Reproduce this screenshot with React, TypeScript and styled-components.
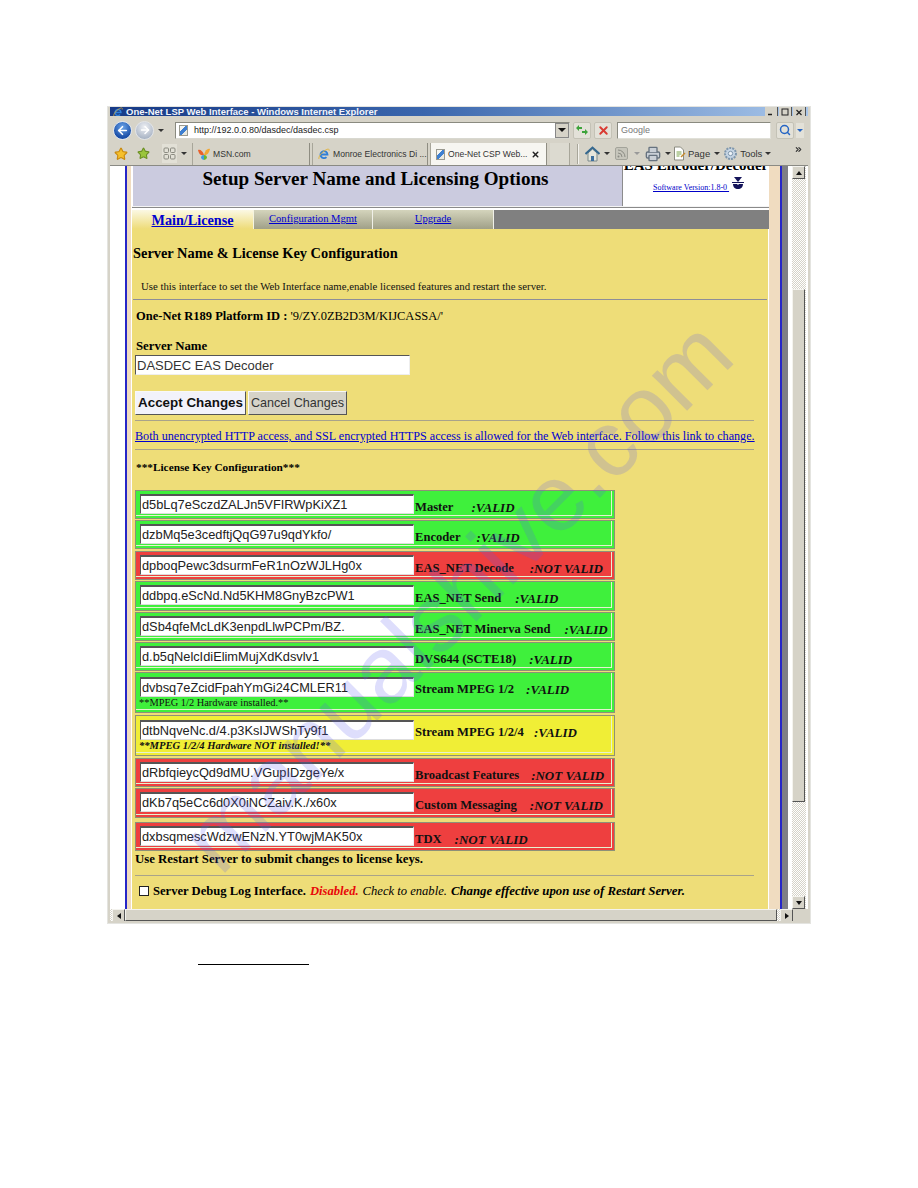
import React from 'react';
import styled, { createGlobalStyle } from 'styled-components';
import { ArrowLeft, ArrowRight, ChevronsRight, Printer, Search, Star, X } from 'lucide-react';

const keys = [
  { key: 'd5bLq7eSczdZALJn5VFIRWpKiXZ1', name: 'Master', status: ':VALID', tone: 'green', gap: 18, h: 29, mb: 1 },
  { key: 'dzbMq5e3cedftjQqG97u9qdYkfo/', name: 'Encoder', status: ':VALID', tone: 'green', gap: 16, h: 29, mb: 2 },
  { key: 'dpboqPewc3dsurmFeR1nOzWJLHg0x', name: 'EAS_NET Decode', status: ':NOT VALID', tone: 'red', gap: 16, h: 29, mb: 1 },
  { key: 'ddbpq.eScNd.Nd5KHM8GnyBzcPW1', name: 'EAS_NET Send', status: ':VALID', tone: 'green', gap: 14, h: 30, mb: 1 },
  { key: 'dSb4qfeMcLdK3enpdLlwPCPm/BZ.', name: 'EAS_NET Minerva Send', status: ':VALID', tone: 'green', gap: 14, h: 29, mb: 1 },
  { key: 'd.b5qNelcIdiElimMujXdKdsvlv1', name: 'DVS644 (SCTE18)', status: ':VALID', tone: 'green', gap: 13, h: 29, mb: 1 },
  { key: 'dvbsq7eZcidFpahYmGi24CMLER11', name: 'Stream MPEG 1/2', status: ':VALID', tone: 'green', gap: 12, h: 41, mb: 2, note: '**MPEG 1/2 Hardware installed.**' },
  { key: 'dtbNqveNc.d/4.p3KsIJWShTy9f1', name: 'Stream MPEG 1/2/4', status: ':VALID', tone: 'yellow', gap: 10, h: 41, mb: 2, note: '**MPEG 1/2/4 Hardware NOT installed!**', noteItalic: true },
  { key: 'dRbfqieycQd9dMU.VGupIDzgeYe/x', name: 'Broadcast Features', status: ':NOT VALID', tone: 'red', gap: 12, h: 29, mb: 1 },
  { key: 'dKb7q5eCc6d0X0iNCZaiv.K./x60x', name: 'Custom Messaging', status: ':NOT VALID', tone: 'red', gap: 13, h: 30, mb: 4 },
  { key: 'dxbsqmescWdzwENzN.YT0wjMAK50x', name: 'TDX', status: ':NOT VALID', tone: 'red', gap: 13, h: 29, mb: 0 },
];

const toneColors: Record<string, string> = {
  green: '#3ff03c',
  red: '#ee3f3f',
  yellow: '#f0ee36',
};

const IeLogo: React.FC<{ size: number }> = ({ size }) => (
  <svg width={size} height={size} viewBox="0 0 12 12" style={{ flex: 'none' }}>
    <path d="M3 6.5h6.5a3.5 3.5 0 1 0-1 2.6" fill="none" stroke="#2f7fd8" strokeWidth="1.8" />
    <path d="M1 11C0 9 4 3 10 1c1 0 1.500 1 1 2" fill="none" stroke="#e2b23a" strokeWidth="0.9" />
  </svg>
);

const App: React.FC = () => {
  return (
    <>
      <GlobalStyle />
      <Sheet>
        <BrowserWindow>
          <TitleBar>
            <IeLogo size={10} />
            <TitleText>One-Net LSP Web Interface - Windows Internet Explorer</TitleText>
            <WindowButtons>
              <WindowButton>
                <svg width="8" height="8" viewBox="0 0 8 8"><path d="M1 6.500h4" stroke="#222" strokeWidth="1.500" /></svg>
              </WindowButton>
              <WindowButton>
                <svg width="8" height="8" viewBox="0 0 8 8"><rect x="1" y="1" width="6" height="6" fill="none" stroke="#222" /></svg>
              </WindowButton>
              <WindowButton>
                <svg width="8" height="8" viewBox="0 0 8 8"><path d="M1.500 2l5 5M6.500 2l-5 5" stroke="#222" strokeWidth="1.200" /></svg>
              </WindowButton>
            </WindowButtons>
          </TitleBar>
          <AddressRow>
            <BackButton><ArrowLeft size={13} strokeWidth={3} color="#fff" /></BackButton>
            <ForwardButton><ArrowRight size={12} strokeWidth={3} color="#fff" /></ForwardButton>
            <TinyCaret $l={4} $r={11} />
            <AddressBox>
              <PageIcon />
              <AddressText>http://192.0.0.80/dasdec/dasdec.csp</AddressText>
              <ComboArrow />
            </AddressBox>
            <SquareButton $ml={3}>
              <svg width="14" height="14" viewBox="0 0 14 14">
                <path d="M1 5l3-3v2h3v2H4v2zM13 9l-3 3v-2H7V8h3V6z" fill="#3da33a" />
              </svg>
            </SquareButton>
            <SquareButton $ml={3}><X size={13} strokeWidth={3.5} color="#d93a32" /></SquareButton>
            <SearchBox>Google</SearchBox>
            <SquareButton $ml={5}><Search size={12} strokeWidth={3} color="#2565c4" /></SquareButton>
            <SmallDrop />
          </AddressRow>
          <TabRow>
            <Star size={14} fill="#f5c02c" color="#c98a10" />
            <AddStar><Star size={13} fill="#9bc53c" color="#6a8e22" /></AddStar>
            <QuickTabs>
              <svg width="13" height="13" viewBox="0 0 13 13">
                <g fill="none" stroke="#8a8a80">
                  <rect x="1" y="1" width="4.5" height="4.5" rx="1" />
                  <rect x="7.5" y="1" width="4.5" height="4.5" rx="1" />
                  <rect x="1" y="7.5" width="4.5" height="4.5" rx="1" />
                  <rect x="7.5" y="7.5" width="4.5" height="4.5" rx="1" />
                </g>
              </svg>
            </QuickTabs>
            <TinyCaret $l={4} $r={5} />
            <BrowserTab $width={118} $gap={2}>
              <svg width="12" height="12" viewBox="0 0 12 12">
                <path d="M0 2c2-1 5 1 6 5-2 1-5 0-6-5z" fill="#e8612c" />
                <path d="M12 1c-2-1-5 1-6 6 2 1 5-1 6-6z" fill="#f2a732" />
                <path d="M6 7c-2 0-3 1-3 3 1 1 2 2 3 2z" fill="#3f9de0" />
                <path d="M6 7c2 0 3 1 3 3-1 1-2 2-3 2z" fill="#6cb52e" />
              </svg>
              <TabLabel>MSN.com</TabLabel>
            </BrowserTab>
            <BrowserTab $width={116} $gap={2}>
              <IeLogo size={12} />
              <TabLabel>Monroe Electronics Di ...</TabLabel>
            </BrowserTab>
            <BrowserTab $width={117} $gap={3} $active>
              <PageIcon />
              <TabLabel>One-Net CSP Web...</TabLabel>
              <TabClose><X size={9} strokeWidth={4} color="#222" /></TabClose>
            </BrowserTab>
            <NewTab />
            <Divider />
            <CommandBar>
              <svg width="15" height="16" viewBox="0 0 15 16">
                <path d="M3 7v8h9V7L7.5 3z" fill="#e6e6dc" stroke="#7b8a8c" />
                <rect x="6" y="10" width="3" height="5" fill="#3d6f9e" />
                <path d="M0.5 8L7.5 1.5 14.5 8" fill="none" stroke="#35688f" strokeWidth="2" />
              </svg>
              <TinyCaret $l={4} $r={5} />
              <svg width="13" height="13" viewBox="0 0 13 13">
                <rect x="0.5" y="0.5" width="12" height="12" rx="1.5" fill="#c6c5bb" stroke="#a3a39a" />
                <circle cx="3.5" cy="9.5" r="1" fill="#8c8c84" />
                <path d="M3 6a4 4 0 0 1 4 4M3 3a7 7 0 0 1 7 7" fill="none" stroke="#8c8c84" />
              </svg>
              <TinyCaret $l={6} $r={5} $faint />
              <Printer size={16} color="#66727f" fill="#c9cfd6" />
              <TinyCaret $l={4} $r={2} />
              <svg width="13" height="15" viewBox="0 0 13 15">
                <path d="M1.5 1h6l3 3v10h-9z" fill="#fff" stroke="#8b8b80" />
                <path d="M3.5 6h5M3.5 8h5M3.5 10h3" stroke="#7aa34a" />
                <path d="M8 11l4-4" stroke="#c68a2e" strokeWidth="1.5" />
              </svg>
              <CommandLabel>Page</CommandLabel>
              <TinyCaret $l={4} $r={3} />
              <svg width="15" height="15" viewBox="0 0 15 15">
                <circle cx="7.5" cy="7.5" r="5.5" fill="#c6d5e4" stroke="#7f97ad" strokeWidth="2" strokeDasharray="2 1" />
                <circle cx="7.5" cy="7.5" r="2.2" fill="#eef3f8" stroke="#7f97ad" />
              </svg>
              <CommandLabel>Tools</CommandLabel>
              <TinyCaret $l={3} $r={0} />
            </CommandBar>
            <OverflowMark><ChevronsRight size={9} strokeWidth={3} color="#333" /></OverflowMark>
          </TabRow>
          <Viewport>
            <PageArea>
              <LeftGutter />
              <BlueRuleLeft />
              <CenterColumn>
                <Banner>
                  <BannerTitle>
                    <h1>Setup Server Name and Licensing Options</h1>
                  </BannerTitle>
                  <BannerLogo>
                    <ClippedHeading>EAS Encoder/Decoder</ClippedHeading>
                    <VersionLine>
                      <VersionLink>Software Version:1.8-0 </VersionLink>
                      <svg width="12" height="12" viewBox="0 0 12 12">
                        <path d="M2 0h8L6 5z" fill="#14145a" />
                        <path d="M0 5.5h12" stroke="#14145a" strokeWidth="1" />
                        <path d="M1 7h4l1 1 1-1h4c0 3-2 5-5 5S1 10 1 7z" fill="#14145a" />
                      </svg>
                    </VersionLine>
                  </BannerLogo>
                </Banner>
                <Tabs>
                  <MainTab>Main/License</MainTab>
                  <SideTab $width={119}>Configuration Mgmt</SideTab>
                  <SideTab $width={121}>Upgrade</SideTab>
                  <TabFiller />
                </Tabs>
                <Panel>
                  <PanelTitle>Server Name &amp; License Key Configuration</PanelTitle>
                  <Intro>Use this interface to set the Web Interface name,enable licensed features and restart the server.</Intro>
                  <FullRule />
                  <PlatformLine>
                    <b>One-Net R189 Platform ID :</b> '9/ZY.0ZB2D3M/KIJCASSA/'
                  </PlatformLine>
                  <FieldLabel>Server Name</FieldLabel>
                  <ServerInput>DASDEC EAS Decoder</ServerInput>
                  <ButtonRow>
                    <AcceptButton>Accept Changes</AcceptButton>
                    <CancelButton>Cancel Changes</CancelButton>
                  </ButtonRow>
                  <InnerRule $top={5} />
                  <AccessLink>Both unencrypted HTTP access, and SSL encrypted HTTPS access is allowed for the Web interface. Follow this link to change.</AccessLink>
                  <InnerRule $top={6} />
                  <LicenseHeading>***License Key Configuration***</LicenseHeading>
                  <KeyTable>
                    {keys.map((row) => (
                      <KeyRow key={row.key} $tone={toneColors[row.tone]} $height={row.h} $mb={row.mb}>
                        <KeyField>
                          <KeyInput $low={!!row.note}>{row.key}</KeyInput>
                          {row.note && <KeyNote $italic={row.noteItalic}>{row.note}</KeyNote>}
                        </KeyField>
                        <KeyLabel>
                          <KeyName>{row.name}</KeyName>
                          <KeyStatus $gap={row.gap}>{row.status}</KeyStatus>
                        </KeyLabel>
                      </KeyRow>
                    ))}
                  </KeyTable>
                  <RestartNote>Use Restart Server to submit changes to license keys.</RestartNote>
                  <InnerRule $top={9} />
                  <DebugLine>
                    <DebugBox />
                    <b>Server Debug Log Interface.</b>
                    <Disabled>Disabled.</Disabled>
                    <em>Check to enable.</em>
                    <LastNote>Change effective upon use of Restart Server.</LastNote>
                  </DebugLine>
                </Panel>
              </CenterColumn>
              <RightMargin />
              <BlueRuleRight />
              <GreyGutter />
            </PageArea>
            <VerticalScroll>
              <ScrollArrow><UpTriangle /></ScrollArrow>
              <ScrollTrackTop />
              <ScrollThumb />
              <ScrollTrack />
              <ScrollArrow><DownTriangle /></ScrollArrow>
            </VerticalScroll>
          </Viewport>
          <HorizontalScroll>
            <ScrollArrow><LeftTriangle /></ScrollArrow>
            <HorizontalThumb />
            <HorizontalTrack />
            <ScrollArrow><RightTriangle /></ScrollArrow>
            <ScrollCorner />
          </HorizontalScroll>
          <Watermark aria-hidden>manualshive.com</Watermark>
        </BrowserWindow>
        <UnderLine />
      </Sheet>
    </>
  );
};

const GlobalStyle = createGlobalStyle`
  html, body {
    margin: 0;
    padding: 0;
    background: #fff;
  }
`;

const Sheet = styled.div`
  width: 918px;
  height: 1188px;
  padding-top: 107px;
  box-sizing: border-box;
  overflow: hidden;
  font-family: 'Liberation Serif', serif;
  color: #000;
`;

const BrowserWindow = styled.div`
  position: relative;
  width: 702px;
  height: 816px;
  margin-left: 108px;
  box-sizing: border-box;
  border-left: 2px solid #d6d3c8;
  border-right: 2px solid #d6d3c8;
  border-bottom: 2px solid #d6d3c8;
  overflow: hidden;
  box-shadow: 0 0 0 1px #e4e4e0;
`;

const TitleBar = styled.div`
  height: 9px;
  display: flex;
  align-items: center;
  padding-left: 3px;
  background: linear-gradient(90deg, #173a86 0%, #3a66ad 45%, #a8c6ea 100%);
  overflow: hidden;
`;

const TitleText = styled.div`
  flex: 1;
  font: bold 9.5px/9px 'Liberation Sans', sans-serif;
  color: #f2f5fb;
  padding-left: 3px;
  white-space: nowrap;
`;

const WindowButtons = styled.div`
  display: flex;
  gap: 1px;
  padding-right: 2px;
`;

const WindowButton = styled.span`
  display: flex;
  align-items: center;
  justify-content: center;
  width: 13px;
  height: 9px;
  background: #d6d3c8;
  border-right: 1px solid #555;
  box-sizing: border-box;
`;

const AddressRow = styled.div`
  height: 26px;
  display: flex;
  align-items: center;
  background: #d6d3c8;
  padding: 2px 0 0 3px;
  box-sizing: border-box;
`;

const BackButton = styled.div`
  flex: none;
  width: 19px;
  height: 19px;
  border-radius: 50%;
  background: radial-gradient(circle at 50% 30%, #6aa3e8, #1b4fa8 70%);
  border: 1px solid #dfe6f0;
  box-sizing: border-box;
  display: flex;
  align-items: center;
  justify-content: center;
`;

const ForwardButton = styled(BackButton)`
  margin-left: 3px;
  background: radial-gradient(circle at 50% 30%, #eef0f4, #a8b3c4 80%);
  border-color: #e3e5e8;
`;

const TinyCaret = styled.span<{ $l: number; $r: number; $faint?: boolean }>`
  flex: none;
  width: 0;
  height: 0;
  margin: 0 ${(p) => p.$r}px 0 ${(p) => p.$l}px;
  border-left: 3px solid transparent;
  border-right: 3px solid transparent;
  border-top: 3px solid ${(p) => (p.$faint ? '#999' : '#333')};
`;

const AddressBox = styled.div`
  flex: none;
  width: 395px;
  height: 17px;
  padding-left: 3px;
  display: flex;
  align-items: center;
  gap: 4px;
  background: #fff;
  border: 1px solid #8a8a80;
  border-bottom-color: #d8d8d0;
  border-right-color: #d8d8d0;
  box-sizing: border-box;
`;

const PageIcon = styled.span`
  flex: none;
  width: 9px;
  height: 11px;
  background: linear-gradient(135deg, #f5f5f0 35%, #3e7fd0 36%, #3e7fd0 65%, #e8e8e0 66%);
  border: 1px solid #9a9a90;
  box-sizing: border-box;
`;

const AddressText = styled.span`
  flex: 1;
  padding-left: 2px;
  font: 9px 'Liberation Sans', sans-serif;
  color: #222;
`;

const ComboArrow = styled.span`
  flex: none;
  width: 14px;
  height: 15px;
  background: #d6d3c8;
  border: 1px solid #888;
  box-sizing: border-box;
  position: relative;

  &::after {
    content: '';
    position: absolute;
    left: 2px;
    top: 4px;
    border-left: 4px solid transparent;
    border-right: 4px solid transparent;
    border-top: 4px solid #111;
  }
`;

const SquareButton = styled.div<{ $ml: number }>`
  flex: none;
  width: 18px;
  height: 17px;
  margin-left: ${(p) => p.$ml}px;
  display: flex;
  align-items: center;
  justify-content: center;
  background: #e3e1d8;
  border: 1px solid #c4c2b6;
  border-radius: 2px;
  box-sizing: border-box;
`;

const SearchBox = styled.div`
  flex: none;
  width: 154px;
  height: 17px;
  margin-left: 5px;
  padding-left: 3px;
  font: 9px/15px 'Liberation Sans', sans-serif;
  color: #777;
  background: #fff;
  border: 1px solid #8a8a80;
  border-bottom-color: #e0e0d8;
  border-right-color: #e0e0d8;
  box-sizing: border-box;
`;

const SmallDrop = styled.div`
  flex: none;
  width: 8px;
  height: 15px;
  margin-left: 2px;
  background: #e3e1d8;
  position: relative;

  &::after {
    content: '';
    position: absolute;
    left: 1px;
    top: 6px;
    border-left: 3px solid transparent;
    border-right: 3px solid transparent;
    border-top: 3px solid #2565c4;
  }
`;

const TabRow = styled.div`
  position: relative;
  height: 24px;
  display: flex;
  align-items: center;
  background: #d6d3c8;
  padding-left: 4px;
  box-sizing: border-box;
  border-bottom: 1px solid #8a8a84;
`;

const AddStar = styled.span`
  display: flex;
  margin-left: 9px;
`;

const QuickTabs = styled.span`
  flex: none;
  display: flex;
  align-items: center;
  justify-content: center;
  width: 15px;
  height: 19px;
  margin-left: 12px;
  background: #e2e0d6;
`;

const BrowserTab = styled.div<{ $width: number; $gap: number; $active?: boolean }>`
  flex: none;
  width: ${(p) => p.$width}px;
  height: 22px;
  margin: 1px ${(p) => p.$gap}px 0 0;
  padding-left: 5px;
  display: flex;
  align-items: center;
  gap: 3px;
  box-sizing: border-box;
  font: 8.6px 'Liberation Sans', sans-serif;
  color: #333;
  white-space: nowrap;
  background: ${(p) => (p.$active ? '#f7f6f1' : '#d6d3c8')};
  border-left: 1px solid #a8a69a;
  border-right: 1px solid #8f8d82;
`;

const TabLabel = styled.span`
  flex: 1;
`;

const TabClose = styled.span`
  display: flex;
  margin-right: 6px;
`;

const NewTab = styled.div`
  flex: none;
  width: 20px;
  height: 22px;
  margin-top: 1px;
  background: #dcdad0;
  border-right: 1px solid #a8a69a;
  box-sizing: border-box;
`;

const Divider = styled.div`
  flex: none;
  width: 2px;
  height: 20px;
  margin-left: 7px;
  background: #f4f3ee;
  border-left: 1px solid #a8a69a;
  box-sizing: border-box;
`;

const CommandBar = styled.div`
  display: flex;
  align-items: center;
  margin-left: 6px;
`;

const CommandLabel = styled.span`
  font: 9.5px 'Liberation Sans', sans-serif;
  color: #333;
  margin-left: 2px;
`;

const OverflowMark = styled.span`
  position: absolute;
  right: 5px;
  top: 3px;
  display: flex;
`;

const Viewport = styled.div`
  height: 743px;
  display: flex;
  background: #fff;
`;

const PageArea = styled.div`
  flex: none;
  width: 682px;
  display: flex;
  overflow: hidden;
`;

const LeftGutter = styled.div`
  flex: none;
  width: 15px;
  background: #fff;
`;

const BlueRuleLeft = styled.div`
  flex: none;
  width: 7px;
  box-sizing: border-box;
  border-left: 2px solid #2626c8;
  background: #f0dcc0;
  border-right: 1px solid #fff;
`;

const CenterColumn = styled.div`
  flex: none;
  width: 637px;
  display: flex;
  flex-direction: column;
`;

const Banner = styled.div`
  height: 40px;
  display: flex;
  flex: none;
  margin-bottom: 3px;
  border-bottom: 1px solid #f4f4f4;
  box-shadow: 0 1px 0 #8a8a8a;
`;

const BannerTitle = styled.div`
  flex: none;
  width: 490px;
  margin-left: 1px;
  background: #cbcbdf;
  border-right: 1px solid #8c8c8c;
  box-sizing: border-box;

  h1 {
    margin: 0;
    padding-top: 1px;
    padding-right: 4px;
    font: bold 19.1px/24px 'Liberation Serif', serif;
    text-align: center;
    white-space: nowrap;
  }
`;

const BannerLogo = styled.div`
  flex: 1;
  background: #fff;
  overflow: hidden;
  text-align: center;
`;

const ClippedHeading = styled.div`
  font: bold 15px/14px 'Liberation Serif', serif;
  height: 6px;
  margin-top: -8px;
  padding-bottom: 8px;
  white-space: nowrap;
`;

const VersionLine = styled.div`
  display: flex;
  align-items: flex-start;
  gap: 3px;
  margin: 5px 0 0 30px;
`;

const VersionLink = styled.a`
  font: 8px/12px 'Liberation Serif', serif;
  color: #0000c8;
  text-decoration: underline;
  white-space: pre;
  margin-top: 5px;
`;

const Tabs = styled.div`
  height: 19px;
  display: flex;
  flex: none;
`;

const MainTab = styled.a`
  flex: none;
  width: 122px;
  text-align: center;
  font: bold 14.2px/21px 'Liberation Serif', serif;
  color: #0000d0;
  text-decoration: underline;
  background: linear-gradient(180deg, #fbf8e4 0%, #eedc78 100%);
  border-right: 1px solid #f4f4e0;
  box-sizing: border-box;
`;

const SideTab = styled.a<{ $width: number }>`
  flex: none;
  width: ${(p) => p.$width}px;
  text-align: center;
  font: 10.6px/18px 'Liberation Serif', serif;
  color: #0000d0;
  text-decoration: underline;
  background: linear-gradient(180deg, #d4d4bc 0%, #a0a088 100%);
  border-right: 1px solid #f0f0e8;
  box-sizing: border-box;
`;

const TabFiller = styled.div`
  flex: 1;
  background: #808080;
`;

const Panel = styled.div`
  flex: 1;
  background: #eedd78;
  padding: 17px 0 0 1px;
  border-right: 1px solid #fff;
  box-sizing: border-box;
`;

const PanelTitle = styled.div`
  font: bold 14.4px/15px 'Liberation Serif', serif;
  white-space: nowrap;
`;

const Intro = styled.div`
  font: 10.75px/12px 'Liberation Serif', serif;
  margin: 19px 0 0 8px;
  color: #111;
  white-space: nowrap;
`;

const FullRule = styled.div`
  height: 1px;
  margin: 7px 1px 0 0;
  background: #8d8d98;
`;

const PlatformLine = styled.div`
  font: 12.5px/14px 'Liberation Serif', serif;
  margin: 9px 0 0 3px;
`;

const FieldLabel = styled.div`
  font: bold 12.8px/13px 'Liberation Serif', serif;
  margin: 17px 0 0 3px;
`;

const ServerInput = styled.div`
  width: 275px;
  height: 20px;
  margin: 2px 0 0 2px;
  padding-left: 1px;
  font: 13px/19px 'Liberation Sans', sans-serif;
  color: #333;
  background: #fff;
  border-top: 1px solid #555;
  border-left: 1px solid #555;
  border-right: 1px solid #eee;
  border-bottom: 1px solid #eee;
  box-sizing: border-box;
`;

const ButtonRow = styled.div`
  display: flex;
  gap: 2px;
  margin: 16px 0 0 2px;
`;

const AcceptButton = styled.div`
  width: 111px;
  height: 24px;
  font: bold 13.4px/22px 'Liberation Sans', sans-serif;
  text-align: center;
  white-space: nowrap;
  color: #111;
  background: #f2f2fa;
  border: 1px solid #f8f8f8;
  border-right-color: #555;
  border-bottom-color: #555;
  box-sizing: border-box;
`;

const CancelButton = styled(AcceptButton)`
  width: 99px;
  font: 12.6px/22px 'Liberation Sans', sans-serif;
  color: #333;
  background: #d6d3c8;
`;

const InnerRule = styled.div<{ $top: number }>`
  height: 1px;
  margin: ${(p) => p.$top}px 14px 0 2px;
  background: #a9a38a;
`;

const AccessLink = styled.a`
  display: block;
  font: 12.15px/14px 'Liberation Serif', serif;
  color: #0000d0;
  text-decoration: underline;
  margin: 8px 0 5px 2px;
  white-space: nowrap;
`;

const LicenseHeading = styled.div`
  font: bold 11.3px/13px 'Liberation Serif', serif;
  margin: 11px 0 0 3px;
`;

const KeyTable = styled.div`
  width: 480px;
  margin: 16px 0 0 2px;
  display: flex;
  flex-direction: column;
`;

const KeyRow = styled.div<{ $tone: string; $height: number; $mb: number }>`
  display: flex;
  flex: none;
  height: ${(p) => p.$height}px;
  margin-bottom: ${(p) => p.$mb}px;
  padding: 3px 0 0 4px;
  background: ${(p) => p.$tone};
  border: 1px solid #8d9078;
  box-shadow: inset -2px -2px 0 ${(p) => p.$tone}, inset -3px -3px 0 #e6f2d0;
  box-sizing: border-box;
`;

const KeyField = styled.div`
  flex: none;
  width: 274px;
`;

const KeyInput = styled.div<{ $low: boolean }>`
  width: 274px;
  height: 20px;
  margin-top: ${(p) => (p.$low ? 1 : 0)}px;
  padding-left: 1px;
  font: 12.8px/18px 'Liberation Sans', sans-serif;
  color: #222;
  background: #fff;
  border-top: 2px solid #555;
  border-left: 1px solid #555;
  border-right: 1px solid #eee;
  border-bottom: 1px solid #ddd;
  box-sizing: border-box;
  white-space: nowrap;
`;

const KeyNote = styled.div<{ $italic?: boolean }>`
  font: ${(p) => (p.$italic ? 'italic bold 10.6px' : 'normal 10.4px')}/12px 'Liberation Serif', serif;
  color: #111;
  margin: 0 0 0 -1px;
  white-space: nowrap;
`;

const KeyLabel = styled.div`
  margin-left: 1px;
  padding-top: 6px;
  font: bold 12.6px/15px 'Liberation Serif', serif;
  white-space: nowrap;
  display: flex;
`;

const KeyName = styled.span`
  color: #111;
`;

const KeyStatus = styled.em<{ $gap: number }>`
  margin-left: ${(p) => p.$gap}px;
  font-size: 13px;
  color: #111;
`;

const RestartNote = styled.div`
  font: bold 12.8px/14px 'Liberation Serif', serif;
  margin: 1px 0 0 2px;
`;

const DebugLine = styled.div`
  display: flex;
  align-items: center;
  gap: 4px;
  margin: 8px 0 0 6px;
  font: 12.6px/14px 'Liberation Serif', serif;
  white-space: nowrap;
`;

const DebugBox = styled.span`
  width: 8px;
  height: 8px;
  background: #fff;
  border: 1px solid #222;
`;

const Disabled = styled.b`
  color: #e80808;
  font-style: italic;
`;

const LastNote = styled.b`
  font-style: italic;
  font-size: 12.8px;
`;

const RightMargin = styled.div`
  flex: none;
  width: 11px;
  background: #f0dcc0;
`;

const BlueRuleRight = styled.div`
  flex: none;
  width: 2px;
  background: #2626c8;
`;

const GreyGutter = styled.div`
  flex: none;
  width: 10px;
  background: linear-gradient(90deg, #7f7f86 60%, #fff 60%);
`;

const ScrollArrow = styled.div`
  flex: none;
  width: 13px;
  height: 13px;
  display: flex;
  align-items: center;
  justify-content: center;
  background: #d6d3c8;
  border: 1px solid #f4f3ee;
  border-right-color: #555;
  border-bottom-color: #555;
  box-sizing: border-box;
`;

const VerticalScroll = styled.div`
  flex: none;
  width: 14px;
  display: flex;
  flex-direction: column;
  background: repeating-conic-gradient(#d6d3c8 0 25%, #fff 0 50%) 0 0 / 2px 2px;
`;

const ScrollTrackTop = styled.div`
  height: 110px;
  flex: none;
`;

const ScrollThumb = styled.div`
  flex: none;
  height: 513px;
  width: 13px;
  background: #d6d3c8;
  border: 1px solid #f4f3ee;
  border-right-color: #555;
  border-bottom-color: #555;
  box-sizing: border-box;
`;

const ScrollTrack = styled.div`
  flex: 1;
`;

const HorizontalScroll = styled.div`
  height: 12px;
  display: flex;
  background: repeating-conic-gradient(#d6d3c8 0 25%, #fff 0 50%) 0 0 / 2px 2px;
  padding-left: 2px;
`;

const HorizontalThumb = styled.div`
  flex: none;
  width: 652px;
  background: #d6d3c8;
  border: 1px solid #f4f3ee;
  border-right-color: #555;
  border-bottom-color: #555;
  box-sizing: border-box;
`;

const HorizontalTrack = styled.div`
  flex: 1;
`;

const ScrollCorner = styled.div`
  flex: none;
  width: 15px;
  background: #d6d3c8;
`;

const UpTriangle = styled.span`
  border-left: 3px solid transparent;
  border-right: 3px solid transparent;
  border-bottom: 4px solid #111;
`;

const DownTriangle = styled.span`
  border-left: 3px solid transparent;
  border-right: 3px solid transparent;
  border-top: 4px solid #111;
`;

const LeftTriangle = styled.span`
  border-top: 3px solid transparent;
  border-bottom: 3px solid transparent;
  border-right: 4px solid #111;
`;

const RightTriangle = styled.span`
  border-top: 3px solid transparent;
  border-bottom: 3px solid transparent;
  border-left: 4px solid #111;
`;

const Watermark = styled.div`
  position: absolute;
  left: 111px;
  top: 691px;
  font: 94px/1 'Liberation Sans', sans-serif;
  color: rgba(90, 90, 240, 0.2);
  white-space: nowrap;
  pointer-events: none;
  transform-origin: 0 79.6px;
  transform: rotate(-45deg);
`;

const UnderLine = styled.div`
  width: 111px;
  height: 1px;
  margin: 41px 0 0 198px;
  background: #000;
`;

export default App;
